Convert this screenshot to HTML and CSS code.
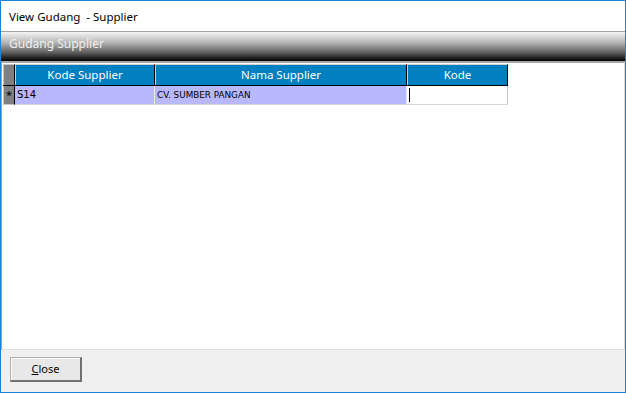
FILE: index.html
```html
<!DOCTYPE html>
<html>
<head>
<meta charset="utf-8">
<link rel="stylesheet" href="styles.css">
</head>
<body>
<div class="window">
  <div class="titlebar">View Gudang&nbsp; - Supplier</div>
  <div class="panelhead">Gudang Supplier</div>
  <div class="content">
    <div class="grid">
      <div class="row head">
        <div class="sel"></div>
        <div class="cell c1">Kode Supplier</div>
        <div class="cell c2">Nama Supplier</div>
        <div class="cell c3">Kode</div>
      </div>
      <div class="row data">
        <div class="sel">*</div>
        <div class="cell c1">S14</div>
        <div class="cell c2">CV. SUMBER PANGAN</div>
        <div class="cell c3 edit"><span class="caret"></span></div>
      </div>
    </div>
  </div>
  <div class="footer">
    <button class="btn"><u>C</u>lose</button>
  </div>
</div>
</body>
</html>
```
FILE: styles.css
```css
html, body { margin: 0; padding: 0; }
body { width: 626px; height: 393px; overflow: hidden; background: #fff; }
.window {
  box-sizing: border-box;
  width: 626px; height: 393px;
  border: 1px solid #1883d7;
  display: flex; flex-direction: column;
  font-family: "Noto Sans", "DejaVu Sans", sans-serif;
}
.titlebar {
  height: 30px;
  padding-left: 8px;
  font-size: 11.5px;
  line-height: 31px;
  color: #000;
  background: #fff;
}
.panelhead {
  height: 29px;
  border-top: 1px solid #a0a0a0;
  background: linear-gradient(to bottom, #f4f4f4 0%, #b8b8b8 35%, #606060 70%, #000 100%);
  color: #f0f0f0;
  font-size: 12px;
  line-height: 24px;
  padding-left: 8px;
}
.content {
  flex: 1;
  border-top: 2px solid #a8a8a8;
  border-left: 1px solid #a0a0a0;
  border-right: 1px solid #d8d8d8;
  border-bottom: 1px solid #e0e0e0;
  background: #fff;
  padding: 1px 0 0 1px;
}
.grid { display: flex; flex-direction: column; width: 505px; }
.row { display: flex; }
.sel {
  width: 12px;
  background: #808080;
  border: 1px solid #c8c8c8;
  border-right: 1px solid #000;
  box-sizing: border-box;
  font-size: 10px;
  color: #000;
  text-align: center;
}
.head { height: 21px; border-bottom: 1px solid #000; }
.head .sel { border-bottom: none; }
.head .cell {
  background: #0080c0;
  color: #fff;
  font-size: 11.5px;
  line-height: 19px;
  text-align: center;
  border: 1px solid #d0d0d0;
  border-right: 1px solid #000;
  border-bottom: none;
  box-sizing: border-box;
}
.cell { box-sizing: border-box; }
.c1 { width: 140px; }
.c2 { width: 252px; }
.c3 { width: 101px; }
.data { height: 19px; }
.data .sel { background: #808080; border-top: none; line-height: 18px; font-size: 11px; }
.data .cell {
  background: #b8b8ff;
  font-family: "DejaVu Sans", sans-serif;
  font-size: 8.8px;
  line-height: 18px;
  padding-left: 2px;
  color: #000;
  border-right: 1px solid #e8e8e8;
  border-bottom: 1px solid #d8d8d8;
}
.data .c1 { font-size: 10px; }
.data .edit { background: #fff; border-right: 1px solid #c8c8c8; }
.caret {
  display: block;
  width: 1px; height: 14px;
  background: #000;
  margin-top: 2px;
}
.footer {
  height: 42px;
  background: #f0f0f0;
  padding: 6px 0 0 9px;
  box-sizing: border-box;
}
.btn {
  width: 72px; height: 25px;
  background: #e8e8e8;
  border: 1px solid #adadad;
  border-right: 2px solid #707070;
  border-bottom: 2px solid #707070;
  box-shadow: inset 1px 1px 0 #fff;
  font-family: "Noto Sans", sans-serif;
  font-size: 11px;
  color: #000;
  padding: 0;
}
```
